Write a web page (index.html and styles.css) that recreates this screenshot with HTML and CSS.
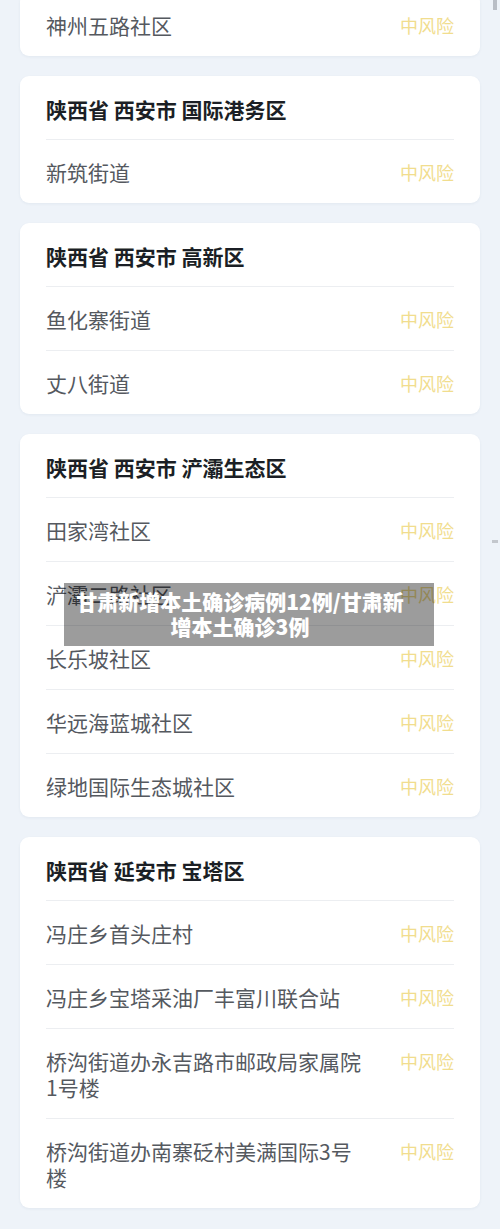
FILE: index.html
```html
<!DOCTYPE html>
<html lang="zh-CN">
<head>
    <meta charset="UTF-8">
    <meta name="viewport" content="width=device-width, initial-scale=1.0">
    <title>中风险地区</title>
    <link rel="stylesheet" href="styles.css">
</head>
<body>
    <div class="page">
        <div class="list">
            <div class="card">
                <div class="row"><span class="place">神州五路社区</span><span class="risk">中风险</span></div>
            </div>

            <div class="card">
                <div class="card-title">陕西省 西安市 国际港务区</div>
                <div class="row"><span class="place">新筑街道</span><span class="risk">中风险</span></div>
            </div>

            <div class="card">
                <div class="card-title">陕西省 西安市 高新区</div>
                <div class="row"><span class="place">鱼化寨街道</span><span class="risk">中风险</span></div>
                <div class="row"><span class="place">丈八街道</span><span class="risk">中风险</span></div>
            </div>

            <div class="card">
                <div class="card-title">陕西省 西安市 浐灞生态区</div>
                <div class="row"><span class="place">田家湾社区</span><span class="risk">中风险</span></div>
                <div class="row"><span class="place">浐灞二路社区</span><span class="risk">中风险</span></div>
                <div class="row"><span class="place">长乐坡社区</span><span class="risk">中风险</span></div>
                <div class="row"><span class="place">华远海蓝城社区</span><span class="risk">中风险</span></div>
                <div class="row"><span class="place">绿地国际生态城社区</span><span class="risk">中风险</span></div>
            </div>

            <div class="card">
                <div class="card-title">陕西省 延安市 宝塔区</div>
                <div class="row"><span class="place">冯庄乡首头庄村</span><span class="risk">中风险</span></div>
                <div class="row"><span class="place">冯庄乡宝塔采油厂丰富川联合站</span><span class="risk">中风险</span></div>
                <div class="row"><span class="place">桥沟街道办永吉路市邮政局家属院1号楼</span><span class="risk">中风险</span></div>
                <div class="row"><span class="place">桥沟街道办南寨砭村美满国际3号楼</span><span class="risk">中风险</span></div>
            </div>
        </div>

        <div class="caption">甘肃新增本土确诊病例12例/甘肃新增本土确诊3例</div>
        <div class="scroll-thumb"></div>
        <div class="scroll-mark"></div>
    </div>
</body>
</html>
```

FILE: styles.css
```css
body {
    margin: 0;
    background: #eef3f9;
    font-family: "Noto Sans CJK SC", "Noto Sans", sans-serif;
    overflow: hidden;
}

.page {
    position: relative;
    width: 500px;
    height: 1229px;
    overflow: hidden;
}

.list {
    display: flex;
    flex-direction: column;
    gap: 20px;
    padding: 0 20px;
    margin-top: -7px;
}

.card {
    background: #ffffff;
    border-radius: 9px;
    padding: 0 26px;
    box-shadow: 0 1px 3px rgba(40, 60, 100, 0.06);
}

.card-title {
    font-size: 21px;
    font-weight: bold;
    color: #1b1f25;
    line-height: 26px;
    padding: 20px 0 17px;
    border-bottom: 1px solid #eceef1;
}

.row {
    display: flex;
    justify-content: space-between;
    align-items: flex-start;
    padding: 19px 0 18px;
    border-bottom: 1px solid #eceef1;
}

.row:last-child {
    border-bottom: none;
}

.place {
    max-width: 320px;
    font-size: 21px;
    line-height: 26px;
    color: #55595f;
}

.risk {
    font-size: 18px;
    line-height: 26px;
    color: #f1dd8e;
}

.caption {
    position: absolute;
    top: 583px;
    left: 64px;
    width: 370px;
    height: 63px;
    box-sizing: border-box;
    padding: 6px 30px 0 12px;
    background: rgba(0, 0, 0, 0.39);
    color: #ffffff;
    font-size: 21px;
    font-weight: 900;
    line-height: 25px;
    text-align: center;
}

.scroll-thumb {
    position: absolute;
    top: 0;
    right: 3px;
    width: 4px;
    height: 10px;
    background: #b9bec6;
}

.scroll-mark {
    position: absolute;
    top: 540px;
    right: 2px;
    width: 6px;
    height: 3px;
    background: #c3c7cd;
}
```
